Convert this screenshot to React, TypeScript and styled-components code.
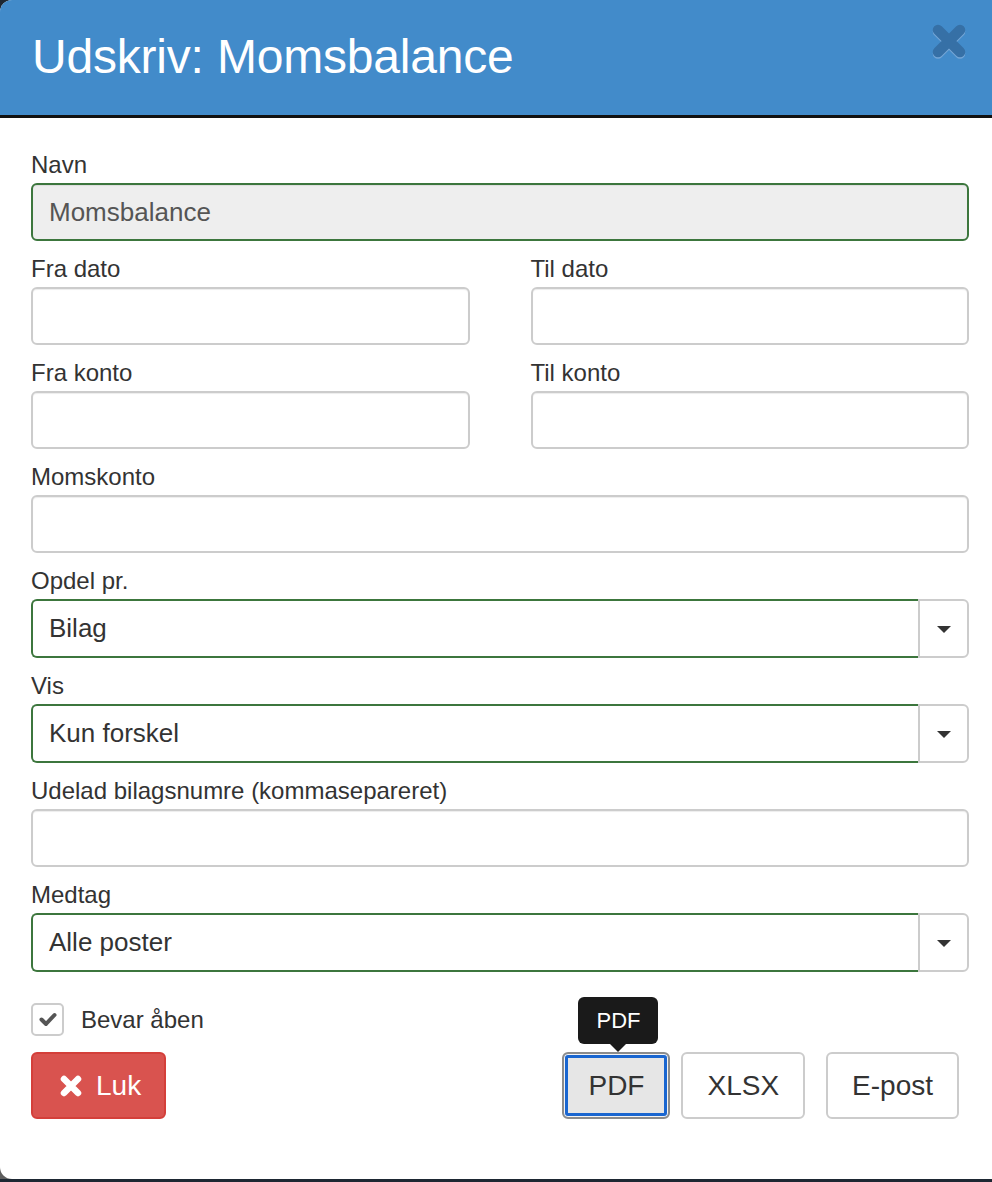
import React from "react";
import styled, { createGlobalStyle } from "styled-components";

const GlobalStyle = createGlobalStyle`
  html, body {
    margin: 0;
    padding: 0;
  }
  body {
    background: linear-gradient(to bottom, #1d2732 0%, #3b4148 50%, #5e5e5e 100%);
    font-family: "Liberation Sans", Arial, Helvetica, sans-serif;
    overflow: hidden;
  }
  * { box-sizing: border-box; }
`;

const Modal = styled.div`
  width: 992px;
  background: #fff;
  border-radius: 12px 0 0 12px;
  overflow: hidden;
  height: 1179px;
  display: flex;
  flex-direction: column;
`;

const Header = styled.div`
  height: 118px;
  background: #428bca;
  border-bottom: 3px solid #111;
  display: flex;
  justify-content: space-between;
  align-items: flex-start;
  padding: 0 24px 0 32px;
`;

const Title = styled.h1`
  margin: 0;
  padding-top: 29px;
  font-size: 48px;
  line-height: 56px;
  font-weight: 400;
  color: #fff;
  letter-spacing: -0.2px;
`;

const CloseButton = styled.button`
  margin-top: 22px;
  background: none;
  border: 0;
  padding: 0;
  width: 38px;
  height: 38px;
  cursor: pointer;
  display: flex;
`;

const Body = styled.div`
  padding: 32px 23px 0 31px;
`;

const Group = styled.div`
  margin-bottom: 13px;
`;

const Label = styled.label`
  display: block;
  font-size: 24px;
  line-height: 30px;
  margin-bottom: 3px;
  color: #333;
`;

const Input = styled.input<{ $valid?: boolean }>`
  display: block;
  width: 100%;
  height: 58px;
  padding: 0 16px;
  font-family: inherit;
  font-size: 26px;
  color: #555;
  background: ${(p) => (p.readOnly ? "#eee" : "#fff")};
  border: 2px solid ${(p) => (p.$valid ? "#3c763d" : "#ccc")};
  border-radius: 6px;
  box-shadow: inset 0 1px 1px rgba(0, 0, 0, 0.075);
  outline: none;
`;

const Row = styled.div`
  display: grid;
  grid-template-columns: 1fr 1fr;
  column-gap: 61px;
`;

const SelectWrap = styled.div`
  display: flex;
  height: 59px;
`;

const SelectBox = styled.div`
  flex: 1;
  display: flex;
  align-items: center;
  padding: 0 16px;
  font-size: 26px;
  color: #333;
  border: 2px solid #3c763d;
  border-right: 0;
  border-radius: 6px 0 0 6px;
`;

const Addon = styled.div`
  width: 51px;
  display: flex;
  align-items: center;
  justify-content: center;
  border: 2px solid #ccc;
  border-radius: 0 6px 6px 0;
  background: #fff;
`;

const Caret = styled.span`
  width: 0;
  height: 0;
  border-left: 7px solid transparent;
  border-right: 7px solid transparent;
  border-top: 7px solid #333;
  margin-top: 2px;
`;

const CheckRow = styled.label`
  display: flex;
  align-items: center;
  gap: 17px;
  padding-top: 18px;
  font-size: 24px;
  color: #333;
`;

const CheckBox = styled.span`
  width: 33px;
  height: 33px;
  border: 2px solid #ccc;
  border-radius: 5px;
  display: flex;
  align-items: center;
  justify-content: center;
  background: #fff;
`;

const ButtonRow = styled.div`
  display: flex;
  justify-content: space-between;
  align-items: flex-start;
  margin-top: 16px;
  padding-right: 10px;
`;

const ButtonGroup = styled.div`
  display: flex;
  align-items: center;
`;

const Btn = styled.button<{ $variant?: "danger" | "default"; $focused?: boolean; $gap?: number }>`
  position: relative;
  height: 67px;
  padding: ${(p) => (p.$variant === "danger" ? "0 23px 0 26px" : "0 24px")};
  font-family: inherit;
  font-size: 28px;
  border-radius: 6px;
  display: flex;
  align-items: center;
  gap: 13px;
  cursor: pointer;
  outline: none;
  margin-left: ${(p) => (p.$gap ?? 0)}px;
  color: ${(p) => (p.$variant === "danger" ? "#fff" : "#333")};
  background: ${(p) =>
    p.$variant === "danger" ? "#d9534f" : p.$focused ? "#e6e6e6" : "#fff"};
  border: 2px solid
    ${(p) =>
      p.$variant === "danger" ? "#d43f3a" : p.$focused ? "#8c8c8c" : "#ccc"};
  box-shadow: ${(p) =>
    p.$focused
      ? "inset 0 0 0 1px #f4f4f4, inset 0 0 0 4px #1a66d0"
      : "none"};
`;

const Tooltip = styled.div`
  position: absolute;
  left: 50%;
  bottom: calc(100% + 10px);
  transform: translateX(-50%);
  margin-left: 2px;
  background: #1a1a1a;
  color: #fff;
  font-size: 22px;
  line-height: 47px;
  height: 47px;
  padding: 0 18px;
  border-radius: 6px;
  white-space: nowrap;
  &::after {
    content: "";
    position: absolute;
    left: 50%;
    top: 100%;
    margin-left: -8px;
    border-left: 8px solid transparent;
    border-right: 8px solid transparent;
    border-top: 8px solid #1a1a1a;
  }
`;

const CloseIcon = () => (
  <svg width="38" height="38" viewBox="0 0 38 38">
    <g transform="translate(0,1.5)">
      <path
        d="M8 8 L30 30 M30 8 L8 30"
        stroke="#74a6d6"
        strokeWidth="10.5"
        strokeLinecap="round"
        fill="none"
      />
    </g>
    <path
      d="M8 8 L30 30 M30 8 L8 30"
      stroke="#3670a6"
      strokeWidth="10.5"
      strokeLinecap="round"
      fill="none"
    />
  </svg>
);

const TimesIcon = () => (
  <svg width="24" height="24" viewBox="0 0 24 24">
    <path
      d="M5 5 L19 19 M19 5 L5 19"
      stroke="#fff"
      strokeWidth="6.5"
      strokeLinecap="round"
      fill="none"
    />
  </svg>
);

const CheckIcon = () => (
  <svg width="18" height="15" viewBox="0 0 18 15">
    <path
      d="M2.5 7.5 L7 12 L15.5 3"
      stroke="#555"
      strokeWidth="4"
      strokeLinecap="round"
      strokeLinejoin="round"
      fill="none"
    />
  </svg>
);

const Select = ({ value }: { value: string }) => (
  <SelectWrap>
    <SelectBox>{value}</SelectBox>
    <Addon>
      <Caret />
    </Addon>
  </SelectWrap>
);

export default function App() {
  return (
    <>
      <GlobalStyle />
      <Modal>
        <Header>
          <Title>Udskriv: Momsbalance</Title>
          <CloseButton aria-label="Luk">
            <CloseIcon />
          </CloseButton>
        </Header>
        <Body>
          <Group>
            <Label>Navn</Label>
            <Input readOnly $valid defaultValue="Momsbalance" />
          </Group>
          <Row>
            <Group>
              <Label>Fra dato</Label>
              <Input />
            </Group>
            <Group>
              <Label>Til dato</Label>
              <Input />
            </Group>
          </Row>
          <Row>
            <Group>
              <Label>Fra konto</Label>
              <Input />
            </Group>
            <Group>
              <Label>Til konto</Label>
              <Input />
            </Group>
          </Row>
          <Group>
            <Label>Momskonto</Label>
            <Input />
          </Group>
          <Group>
            <Label>Opdel pr.</Label>
            <Select value="Bilag" />
          </Group>
          <Group>
            <Label>Vis</Label>
            <Select value="Kun forskel" />
          </Group>
          <Group>
            <Label>Udelad bilagsnumre (kommasepareret)</Label>
            <Input />
          </Group>
          <Group>
            <Label>Medtag</Label>
            <Select value="Alle poster" />
          </Group>
          <CheckRow>
            <CheckBox>
              <CheckIcon />
            </CheckBox>
            Bevar åben
          </CheckRow>
          <ButtonRow>
            <Btn $variant="danger">
              <TimesIcon />
              Luk
            </Btn>
            <ButtonGroup>
              <Btn $focused>
                PDF
                <Tooltip>PDF</Tooltip>
              </Btn>
              <Btn $gap={11}>XLSX</Btn>
              <Btn $gap={21}>E-post</Btn>
            </ButtonGroup>
          </ButtonRow>
        </Body>
      </Modal>
    </>
  );
}
